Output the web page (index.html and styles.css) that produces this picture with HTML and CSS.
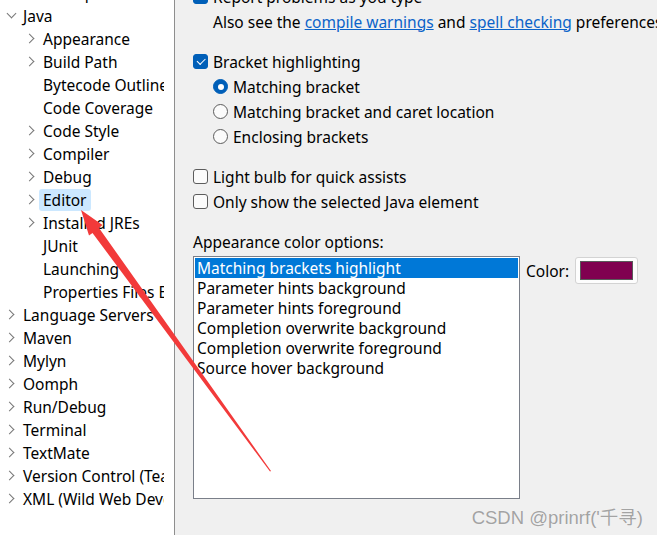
FILE: index.html
```html
<!DOCTYPE html>
<html lang="en">
<head>
    <meta charset="UTF-8">
    <title>Preferences - Java Editor</title>
    <link rel="stylesheet" href="styles.css">
</head>
<body>
<div class="window">
    <aside class="tree">
        <ul>
            <li class="row l1"><span class="twisty"></span><span class="label">Install/Update</span></li>
            <li class="row l1"><span class="twisty open"></span><span class="label">Java</span></li>
            <li class="row l2"><span class="twisty"></span><span class="label">Appearance</span></li>
            <li class="row l2"><span class="twisty"></span><span class="label">Build Path</span></li>
            <li class="row l2"><span class="twisty none"></span><span class="label">Bytecode Outline</span></li>
            <li class="row l2"><span class="twisty none"></span><span class="label">Code Coverage</span></li>
            <li class="row l2"><span class="twisty"></span><span class="label">Code Style</span></li>
            <li class="row l2"><span class="twisty"></span><span class="label">Compiler</span></li>
            <li class="row l2"><span class="twisty"></span><span class="label">Debug</span></li>
            <li class="row l2 selected"><span class="twisty"></span><span class="label">Editor</span></li>
            <li class="row l2"><span class="twisty"></span><span class="label">Installed JREs</span></li>
            <li class="row l2"><span class="twisty none"></span><span class="label">JUnit</span></li>
            <li class="row l2"><span class="twisty none"></span><span class="label">Launching</span></li>
            <li class="row l2"><span class="twisty none"></span><span class="label">Properties Files Editor</span></li>
            <li class="row l1"><span class="twisty"></span><span class="label">Language Servers</span></li>
            <li class="row l1"><span class="twisty"></span><span class="label">Maven</span></li>
            <li class="row l1"><span class="twisty"></span><span class="label">Mylyn</span></li>
            <li class="row l1"><span class="twisty"></span><span class="label">Oomph</span></li>
            <li class="row l1"><span class="twisty"></span><span class="label">Run/Debug</span></li>
            <li class="row l1"><span class="twisty"></span><span class="label">Terminal</span></li>
            <li class="row l1"><span class="twisty"></span><span class="label">TextMate</span></li>
            <li class="row l1"><span class="twisty"></span><span class="label">Version Control (Team)</span></li>
            <li class="row l1"><span class="twisty"></span><span class="label">XML (Wild Web Developer)</span></li>
        </ul>
    </aside>
    <main class="page">
        <div class="opt"><span class="check on"></span>Report problems as you type</div>
        <div class="opt note">Also see the <a href="#">compile warnings</a> and <a href="#">spell checking</a> preferences.</div>

        <div class="group">
            <div class="opt"><span class="check on"></span>Bracket highlighting</div>
            <div class="opt sub"><span class="radio on"></span>Matching bracket</div>
            <div class="opt sub"><span class="radio"></span>Matching bracket and caret location</div>
            <div class="opt sub"><span class="radio"></span>Enclosing brackets</div>
        </div>

        <div class="group">
            <div class="opt"><span class="check"></span>Light bulb for quick assists</div>
            <div class="opt"><span class="check"></span>Only show the selected Java element</div>
        </div>

        <div class="group">
            <div class="opt">Appearance color options:</div>
            <div class="colors">
                <ul class="listbox">
                    <li class="selected">Matching brackets highlight</li>
                    <li>Parameter hints background</li>
                    <li>Parameter hints foreground</li>
                    <li>Completion overwrite background</li>
                    <li>Completion overwrite foreground</li>
                    <li>Source hover background</li>
                </ul>
                <div class="color-pick">
                    <span>Color:</span>
                    <button class="swatch-btn"><span class="swatch"></span></button>
                </div>
            </div>
        </div>
    </main>
</div>

<svg class="arrow" width="657" height="535" viewBox="0 0 657 535">
    <polygon fill="#f23a3a" points="81,210 102.5,225 99,228 271,471 270,471.5 92.5,233 89,235.5"/>
</svg>

<div class="watermark">CSDN @prinrf('千寻)</div>
</body>
</html>
```

FILE: styles.css
```css
* {
    box-sizing: border-box;
}

body {
    margin: 0;
    width: 657px;
    height: 535px;
    overflow: hidden;
    position: relative;
    font-family: 'Noto Sans', sans-serif;
    font-size: 15.5px;
    color: #000;
    background-color: #f0f0f0;
}

ul {
    list-style: none;
    margin: 0;
    padding: 0;
}

.window {
    display: flex;
    height: 100%;
}

/* left tree */
.tree {
    width: 175px;
    flex-shrink: 0;
    background-color: #fff;
    border-right: 1px solid #8e8e8e;
    padding-right: 10px;
}

.tree ul {
    margin-top: -19px;
    overflow: hidden;
}

.row {
    display: flex;
    align-items: center;
    height: 23px;
    white-space: nowrap;
}

.row.l1 {
    padding-left: 3px;
}

.row.l2 {
    padding-left: 23px;
}

.twisty {
    width: 16px;
    height: 16px;
    flex-shrink: 0;
    display: flex;
    justify-content: center;
    align-items: center;
}

.twisty::before {
    content: '';
    width: 6px;
    height: 6px;
    margin-left: -3px;
    border-right: 1.4px solid #777;
    border-bottom: 1.4px solid #777;
    transform: rotate(-45deg);
}

.twisty.open::before {
    margin-left: 0;
    margin-top: -4px;
    transform: rotate(45deg);
}

.twisty.none::before {
    display: none;
}

.label {
    padding: 0 4px;
    line-height: 22px;
    border-radius: 3px;
}

.row.selected .label {
    background-color: #cce8ff;
}

/* right page */
.page {
    flex: 1;
    padding-left: 18px;
    margin-top: -16px;
    white-space: nowrap;
}

.opt {
    display: flex;
    align-items: center;
    gap: 5px;
    height: 25px;
}

.opt.note {
    padding-left: 20px;
    gap: 0;
    white-space: pre;
}

.opt.sub {
    padding-left: 20px;
}

.note a {
    color: #0b63c9;
}

.group {
    margin-top: 15px;
}

.check,
.radio {
    width: 15px;
    height: 15px;
    flex-shrink: 0;
    border: 1px solid #5c5c5c;
    background-color: #fbfbfb;
    display: flex;
    justify-content: center;
    align-items: center;
}

.check {
    border-radius: 3px;
}

.radio {
    border-radius: 50%;
}

.check.on,
.radio.on {
    border-color: #005fb8;
    background-color: #005fb8;
}

.check.on::after {
    content: '';
    width: 7px;
    height: 3.5px;
    margin-top: -2px;
    border-left: 1.2px solid #fff;
    border-bottom: 1.2px solid #fff;
    transform: rotate(-45deg);
}

.radio.on::after {
    content: '';
    width: 6px;
    height: 6px;
    border-radius: 50%;
    background-color: #fff;
}

.colors {
    display: flex;
    align-items: flex-start;
    gap: 6px;
    margin-top: 2px;
}

.listbox {
    width: 327px;
    height: 243px;
    flex-shrink: 0;
    border: 1px solid #7a7f89;
    background-color: #fff;
    padding: 1px;
}

.listbox li {
    height: 20px;
    line-height: 20px;
    padding-left: 2px;
}

.listbox li.selected {
    background-color: #0078d7;
    color: #fff;
}

.color-pick {
    display: flex;
    align-items: center;
    gap: 6px;
    height: 27px;
    margin-top: 1px;
}

.swatch-btn {
    width: 63px;
    height: 27px;
    padding: 0;
    border: 1px solid #d3d3d3;
    border-radius: 3px;
    background-color: #fdfdfd;
    display: flex;
    justify-content: center;
    align-items: center;
}

.swatch {
    width: 53px;
    height: 19px;
    border: 1px solid #5a5a5a;
    background-color: #800050;
}

/* overlays */
.arrow {
    position: absolute;
    left: 0;
    top: 0;
    pointer-events: none;
}

.watermark {
    position: absolute;
    right: 14px;
    bottom: 6px;
    font-family: 'Liberation Sans', 'Noto Sans CJK SC', sans-serif;
    font-size: 18.5px;
    color: #a3a3a3;
    text-shadow: 0 0 1px #fff;
}
```
